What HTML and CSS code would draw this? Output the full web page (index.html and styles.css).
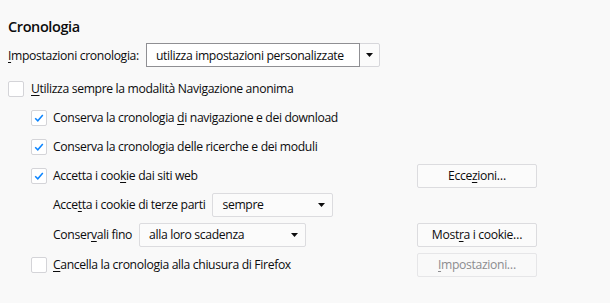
FILE: index.html
```html
<!DOCTYPE html>
<html lang="it">
<head>
<meta charset="utf-8">
<title>Cronologia</title>
<link rel="stylesheet" href="styles.css">
</head>
<body>
<div class="page">
  <h1 class="title">Cronologia</h1>
  <div class="row settings">
    <span class="label"><u>I</u>mpostazioni cronologia:</span>
    <div class="select select-main">
      <span class="value">utilizza impostazioni personalizzate</span>
      <span class="arrow-box"><svg class="arrow" width="7" height="4" viewBox="0 0 7 4"><polygon points="0,0 7,0 3.5,4" fill="#0c0c0d"/></svg></span>
    </div>
  </div>
  <div class="row line">
    <span class="cb"></span>
    <span><u>U</u>tilizza sempre la modalità Navigazione anonima</span>
  </div>
  <div class="sub">
    <div class="row line">
      <span class="cb"><svg width="14" height="14" viewBox="0 0 14 14"><path d="M3.2 7.2 L5.8 9.8 L10.8 4" fill="none" stroke="#0a84ff" stroke-width="1.5"/></svg></span>
      <span>Conserva la cronologia <u>d</u>i navigazione e dei download</span>
    </div>
    <div class="row line">
      <span class="cb"><svg width="14" height="14" viewBox="0 0 14 14"><path d="M3.2 7.2 L5.8 9.8 L10.8 4" fill="none" stroke="#0a84ff" stroke-width="1.5"/></svg></span>
      <span>Conserva la cronologia delle ricerche e dei moduli</span>
    </div>
    <div class="row line split">
      <div class="group">
        <span class="cb"><svg width="14" height="14" viewBox="0 0 14 14"><path d="M3.2 7.2 L5.8 9.8 L10.8 4" fill="none" stroke="#0a84ff" stroke-width="1.5"/></svg></span>
        <span>Accetta i coo<u>k</u>ie dai siti web</span>
      </div>
      <button class="btn">Ecce<u>z</u>ioni…</button>
    </div>
    <div class="row line inner">
      <span class="label">Acce<u>t</u>ta i cookie di terze parti</span>
      <div class="select select-third">
        <span class="value">sempre</span>
        <svg class="arrow" width="7" height="4" viewBox="0 0 7 4"><polygon points="0,0 7,0 3.5,4" fill="#0c0c0d"/></svg>
      </div>
    </div>
    <div class="row line split keep">
      <div class="group inner">
        <span class="label">Conser<u>v</u>ali fino</span>
        <div class="select select-keep">
          <span class="value">alla loro scadenza</span>
          <svg class="arrow" width="7" height="4" viewBox="0 0 7 4"><polygon points="0,0 7,0 3.5,4" fill="#0c0c0d"/></svg>
        </div>
      </div>
      <button class="btn">Most<u>r</u>a i cookie…</button>
    </div>
    <div class="row line split clear">
      <div class="group">
        <span class="cb"></span>
        <span><u>C</u>ancella la cronologia alla chiusura di Firefox</span>
      </div>
      <button class="btn disabled"><u>I</u>mpostazioni…</button>
    </div>
  </div>
</div>
</body>
</html>
```

FILE: styles.css
```css
html, body {
  margin: 0;
  padding: 0;
  background: #f9f9f9;
}
body {
  font-family: "Open Sans", "Noto Sans", sans-serif;
  font-size: 12.2px;
  letter-spacing: -0.35px;
  color: #0c0c0d;
}
u {
  text-decoration-thickness: 1px;
  text-underline-offset: 2px;
}
.page {
  padding-left: 8px;
  width: 529px;
}
.title {
  margin: 0;
  padding-top: 17px;
  height: 20px;
  line-height: 20px;
  font-size: 14.5px;
  font-weight: 600;
  letter-spacing: -0.4px;
}
.row {
  display: flex;
  align-items: center;
}
.settings {
  margin-top: 6px;
  height: 24px;
  gap: 7px;
}
.line {
  height: 29px;
}
.settings + .line {
  margin-top: 7px;
}
.sub {
  margin-left: 23px;
}
.split {
  justify-content: space-between;
}
.group {
  display: flex;
  align-items: center;
}
.inner {
  padding-left: 22px;
  gap: 7px;
}
.keep, .clear {
  margin-top: 1px;
}
.cb {
  width: 14px;
  height: 14px;
  border: 1px solid #d4d4d8;
  border-radius: 2px;
  background: #ffffff;
  margin-right: 7px;
  display: inline-flex;
  align-items: center;
  justify-content: center;
  flex: none;
}
.sub .cb {
  margin-right: 6px;
}
.select {
  box-sizing: border-box;
  height: 24px;
  border: 1px solid #dcdcdf;
  border-radius: 2px;
  background: #fbfbfb;
  display: flex;
  align-items: center;
  justify-content: space-between;
  padding-left: 9px;
  padding-right: 7px;
}
.select-main {
  width: 234px;
  padding-right: 0;
  border-color: #d7d7db;
}
.select-main .value {
  align-self: stretch;
  display: flex;
  align-items: center;
  flex: 1;
  margin-left: -10px;
  padding-left: 9px;
  border: 1px solid #8f8f93;
  margin-top: -1px;
  margin-bottom: -1px;
  background: #ffffff;
}
.arrow-box {
  width: 19px;
  display: flex;
  justify-content: center;
  align-items: center;
}
.select-third {
  width: 121px;
}
.select-keep {
  width: 167px;
}
.btn {
  box-sizing: border-box;
  width: 120px;
  height: 24px;
  font: inherit;
  letter-spacing: inherit;
  color: #0c0c0d;
  background: #fbfbfb;
  border: 1px solid #dcdcdf;
  border-radius: 2px;
  padding: 0;
}
.btn.disabled {
  color: #8c8c8f;
  border-color: #e6e6e8;
  background: #f9f9f9;
}
```
